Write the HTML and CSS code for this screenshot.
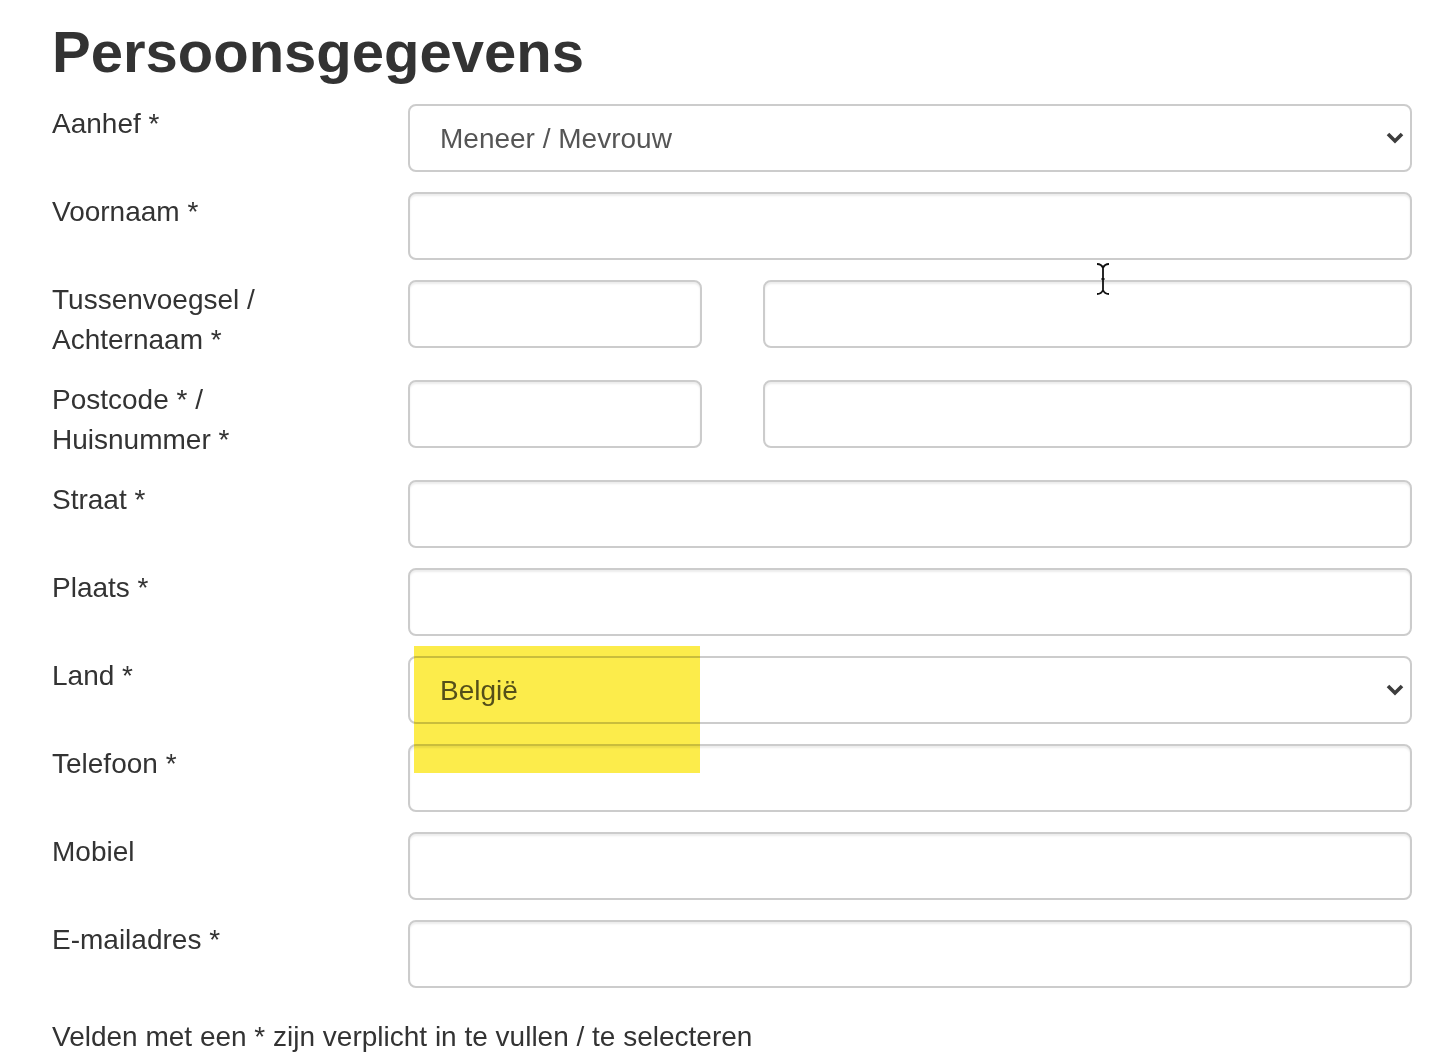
FILE: index.html
```html
<!DOCTYPE html>
<html>
<head>
	<meta charset="UTF-8">
	<title>Persoonsgegevens</title>
	<meta name="viewport" content="width=device-width, initial-scale=1">
	<link rel="stylesheet" href="styles.css">
</head>
<body>

	<div class="page">

		<h1 class="title">Persoonsgegevens</h1>

		<form class="form">

			<label class="form-label" for="aanhef">Aanhef *</label>
			<div class="select-wrap">
				<select id="aanhef" class="form-control">
					<option>Meneer / Mevrouw</option>
				</select>
				<svg class="chevron" viewBox="0 0 18 12" width="18" height="12"><path d="M2 2 L9 9 L16 2" /></svg>
			</div>

			<label class="form-label" for="voornaam">Voornaam *</label>
			<input type="text" id="voornaam" class="form-control">

			<label class="form-label" for="tussenvoegsel">Tussenvoegsel / Achternaam *</label>
			<div class="split">
				<input type="text" id="tussenvoegsel" class="form-control">
				<input type="text" id="achternaam" class="form-control">
			</div>

			<label class="form-label" for="postcode">Postcode * / Huisnummer *</label>
			<div class="split">
				<input type="text" id="postcode" class="form-control">
				<input type="text" id="huisnummer" class="form-control">
			</div>

			<label class="form-label" for="straat">Straat *</label>
			<input type="text" id="straat" class="form-control">

			<label class="form-label" for="plaats">Plaats *</label>
			<input type="text" id="plaats" class="form-control">

			<label class="form-label" for="land">Land *</label>
			<div class="select-wrap">
				<select id="land" class="form-control">
					<option>België</option>
				</select>
				<svg class="chevron" viewBox="0 0 18 12" width="18" height="12"><path d="M2 2 L9 9 L16 2" /></svg>
			</div>

			<label class="form-label" for="telefoon">Telefoon *</label>
			<input type="tel" id="telefoon" class="form-control">

			<label class="form-label" for="mobiel">Mobiel</label>
			<input type="tel" id="mobiel" class="form-control">

			<label class="form-label" for="email">E-mailadres *</label>
			<input type="email" id="email" class="form-control">

		</form>

		<p class="note">Velden met een * zijn verplicht in te vullen / te selecteren</p>

		<div class="highlight"></div>

		<svg class="cursor" viewBox="0 0 16 34" width="16" height="34">
			<path d="M2 2 Q6.5 2 8 6 Q9.5 2 14 2 M8 6 V28 M2 32 Q6.5 32 8 28 Q9.5 32 14 32 M6.5 17 H9.5" />
		</svg>

	</div>

</body>
</html>
```

FILE: styles.css
```css
html {
	box-sizing: border-box;
}

*,
*:before,
*:after {
	box-sizing: inherit;
}

body {
	margin: 0;
	font-family: "Liberation Sans", Helvetica, Arial, sans-serif;
	font-size: 28px;
	line-height: 40px;
	color: #333;
	background: #fff;
}

.page {
	position: relative;
	padding: 20px 26px 0 52px;
}

.title {
	margin: 0 0 20px;
	font-size: 58px;
	line-height: 64px;
	font-weight: bold;
	color: #333;
}

.form {
	display: grid;
	grid-template-columns: 356px 1fr;
	row-gap: 20px;
	align-items: start;
}

.form-label {
	display: block;
	padding-right: 40px;
	font-weight: normal;
}

.form-control {
	display: block;
	width: 100%;
	height: 68px;
	margin: 0;
	padding: 0 30px;
	font-family: "Liberation Sans", Helvetica, Arial, sans-serif;
	font-size: 28px;
	color: #555;
	background-color: #fff;
	border: 2px solid #ccc;
	border-radius: 8px;
	box-shadow: inset 0 2px 2px rgba(0, 0, 0, .075);
	outline: 0;
}

select.form-control {
	-webkit-appearance: none;
	appearance: none;
	box-shadow: none;
}

.select-wrap {
	position: relative;
}

.chevron {
	position: absolute;
	right: 8px;
	top: 50%;
	margin-top: -6px;
	pointer-events: none;
}

.chevron path {
	fill: none;
	stroke: #3d3d3d;
	stroke-width: 3.6;
}

.split {
	display: grid;
	grid-template-columns: 294px 1fr;
	column-gap: 61px;
}

.note {
	margin: 29px 0 0;
}

.highlight {
	position: absolute;
	left: 414px;
	top: 646px;
	width: 286px;
	height: 127px;
	background: #fcec4b;
	mix-blend-mode: multiply;
	pointer-events: none;
}

.cursor {
	position: absolute;
	left: 1095px;
	top: 262px;
	pointer-events: none;
}

.cursor path {
	fill: none;
	stroke: #111;
	stroke-width: 1.8;
}
```
